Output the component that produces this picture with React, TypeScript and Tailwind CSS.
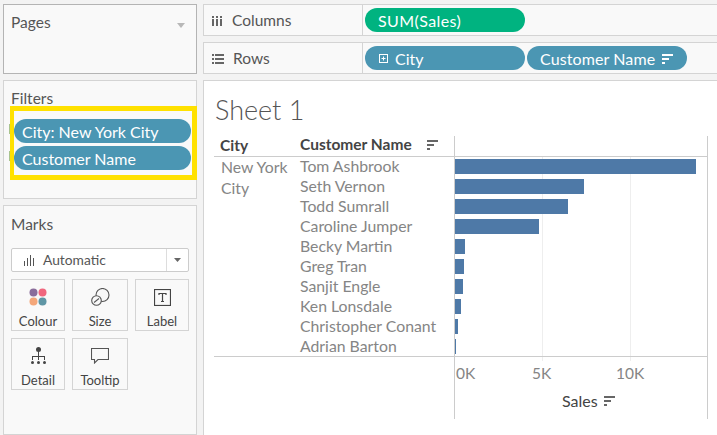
import React from "react";

const rows: [string, number][] = [
  ["Tom Ashbrook", 241],
  ["Seth Vernon", 129],
  ["Todd Sumrall", 113],
  ["Caroline Jumper", 84],
  ["Becky Martin", 10],
  ["Greg Tran", 9],
  ["Sanjit Engle", 8],
  ["Ken Lonsdale", 6],
  ["Christopher Conant", 3],
  ["Adrian Barton", 1],
];

function SortIcon({ color = "#666666" }: { color?: string }) {
  return (
    <svg width="11" height="10" viewBox="0 0 11 10" fill={color}>
      <rect x="0" y="0" width="11" height="2" />
      <rect x="0" y="4" width="7" height="2" />
      <rect x="0" y="8" width="3" height="2" />
    </svg>
  );
}

function Pill({ children, className }: { children: React.ReactNode; className: string }) {
  return (
    <div className={`h-6 flex items-center rounded-xl pt-px text-white text-[16px] ${className}`}>
      {children}
    </div>
  );
}

function MarkButton({ icon, label, wide }: { icon: React.ReactNode; label: string; wide?: boolean }) {
  return (
    <div
      className={`h-[52px] border border-[#d4d4d4] flex flex-col items-center justify-between pt-[7px] pb-px ${
        wide ? "w-[56px]" : "w-[54px]"
      }`}
    >
      <div className="h-[20px] flex items-center">{icon}</div>
      <span className="text-[13px] leading-[16px] text-[#444444]">{label}</span>
    </div>
  );
}

export default function App() {
  return (
    <div
      className="w-[717px] h-[435px] overflow-hidden bg-[#f3f3f3] flex gap-[6px] pl-[3px] pt-1"
      style={{ fontFamily: "Lato, sans-serif" }}
    >
      {/* Left side cards */}
      <div className="w-[194px] shrink-0 flex flex-col gap-[6px]">
        <div className="h-[70px] bg-[#f9f9f9] border border-[#b4b4b4] pl-[7px] pr-3 pt-[5px] flex justify-between">
          <span className="text-[15.5px] leading-[24px] text-[#555555]">Pages</span>
          <svg width="8" height="5" viewBox="0 0 8 5" fill="#b8b8b8" className="mt-[13px] mr-[-1px]">
            <path d="M0 0h8L4 5z" />
          </svg>
        </div>

        <div className="h-[119px] bg-[#f9f9f9] border border-[#d4d4d4] pt-[7px] relative">
          <div className="pl-[7px] text-[15.5px] leading-[20px] text-[#555555]">Filters</div>
          {/* filter handles peeking out behind the yellow highlight */}
          <div className="absolute left-[5px] top-[43px] w-px h-[10px] bg-[#a9c48f]" />
          <div className="absolute left-[5px] top-[70px] w-px h-[10px] bg-[#a9c48f]" />
          <div className="ml-[6px] mt-[-2px] h-[74px] w-[187px] border-y-[5px] border-r-[5px] border-l-4 border-[#ffe100] bg-[#f9f9f9] pt-2 flex flex-col gap-[3px]">
            <Pill className="w-[177px] pl-[8px] bg-[#4b96b3]">City: New York City</Pill>
            <Pill className="w-[177px] pl-[8px] bg-[#4b96b3]">Customer Name</Pill>
          </div>
        </div>

        <div className="flex-1 bg-[#f9f9f9] border border-[#d4d4d4] px-[7px] pt-[6px]">
          <div className="text-[15.5px] leading-[24px] text-[#555555]">Marks</div>
          <div className="mt-[12px] h-6 w-[178px] bg-white border border-[#cccccc] rounded-[2px] flex items-center">
            <div className="flex-1 flex items-center pl-[12px] gap-[8px] text-[13.8px] text-[#555555]">
              <svg width="11" height="11" viewBox="0 0 11 11" fill="#555555">
                <rect x="0" y="6" width="1" height="5" />
                <rect x="3" y="3" width="1" height="8" />
                <rect x="6" y="0" width="1" height="11" />
                <rect x="9" y="3" width="1" height="8" />
              </svg>
              Automatic
            </div>
            <div className="w-[22px] h-full border-l border-[#dddddd] flex items-center justify-center">
              <svg width="7" height="4" viewBox="0 0 7 4" fill="#666666">
                <path d="M0 0h7L3.500 4z" />
              </svg>
            </div>
          </div>
          <div className="mt-[7px] flex flex-wrap gap-x-[7px] gap-y-[7px] w-[182px]">
            <MarkButton
              label="Colour"
              icon={
                <svg width="18" height="18" viewBox="0 0 18 18">
                  <circle cx="4.500" cy="4.500" r="4" fill="#8a6d9b" />
                  <circle cx="13.500" cy="4.500" r="4" fill="#f0677e" />
                  <circle cx="4.500" cy="13.500" r="4" fill="#f4a77a" />
                  <circle cx="13.500" cy="13.500" r="4" fill="#5f96a5" />
                </svg>
              }
            />
            <MarkButton
              wide
              label="Size"
              icon={
                <svg width="19" height="18" viewBox="0 0 19 18" fill="none" stroke="#555555" strokeWidth="1.100">
                  <circle cx="11.500" cy="7" r="6.500" />
                  <circle cx="5.500" cy="12.500" r="4.800" fill="#f9f9f9" />
                  <path d="M3 14.500l5-4" />
                </svg>
              }
            />
            <MarkButton
              label="Label"
              icon={
                <svg width="17" height="17" viewBox="0 0 17 17" fill="none" stroke="#444444">
                  <rect x="0.500" y="0.500" width="16" height="16" strokeWidth="1.200" />
                  <path d="M5 6V4.500h7V6M8.500 4.500v8M7 12.500h3" strokeWidth="1.200" />
                </svg>
              }
            />
            <MarkButton
              label="Detail"
              icon={
                <svg width="17" height="18" viewBox="0 0 17 18" fill="#444444">
                  <circle cx="8.500" cy="2.500" r="2.500" />
                  <path d="M8 4h1v5H8zM2 9h13v1H2zM2 9h1v4H2zM8 9h1v4H8zM14 9h1v4h-1z" />
                  <circle cx="2.500" cy="15.500" r="1.500" />
                  <circle cx="8.500" cy="15.500" r="1.500" />
                  <circle cx="14.500" cy="15.500" r="1.500" />
                </svg>
              }
            />
            <MarkButton
              wide
              label="Tooltip"
              icon={
                <svg width="18" height="16" viewBox="0 0 18 16" fill="none" stroke="#555555" strokeWidth="1.100">
                  <path d="M0.500 0.500h17v11H7l-3.500 3.500v-3.500H0.500z" />
                </svg>
              }
            />
          </div>
        </div>
      </div>

      {/* Shelves and sheet */}
      <div className="flex-1 min-w-0 flex flex-col gap-[6px]">
        <div className="h-[32px] bg-[#f9f9f9] border-y border-l border-[#d4d4d4] flex">
          <div className="w-[159px] border-r border-[#d4d4d4] flex items-center pl-2 gap-[9px] pt-px text-[15.5px] text-[#555555]">
            <svg width="11" height="10" viewBox="0 0 11 10" fill="#666666">
              <rect x="0" y="0" width="2" height="2" />
              <rect x="4" y="0" width="2" height="2" />
              <rect x="8" y="0" width="2" height="2" />
              <rect x="0" y="3" width="2" height="7" />
              <rect x="4" y="3" width="2" height="7" />
              <rect x="8" y="3" width="2" height="7" />
            </svg>
            Columns
          </div>
          <div className="flex-1 pl-[2px] flex items-center">
            <Pill className="w-[160px] pl-[13px] bg-[#00b380] tracking-[0.4px]">SUM(Sales)</Pill>
          </div>
        </div>

        <div className="h-[32px] bg-[#f9f9f9] border-y border-l border-[#d4d4d4] flex">
          <div className="w-[159px] border-r border-[#d4d4d4] flex items-center pl-2 gap-[9px] pt-px text-[15.5px] text-[#555555]">
            <svg width="12" height="10" viewBox="0 0 12 10" fill="#666666">
              <rect x="0" y="0" width="2" height="2" />
              <rect x="3" y="0" width="9" height="2" />
              <rect x="0" y="4" width="2" height="2" />
              <rect x="3" y="4" width="9" height="2" />
              <rect x="0" y="8" width="2" height="2" />
              <rect x="3" y="8" width="9" height="2" />
            </svg>
            Rows
          </div>
          <div className="flex-1 pl-[2px] flex items-center gap-[2px]">
            <Pill className="w-[160px] pl-[14px] gap-[7px] bg-[#4b96b3]">
              <svg width="9" height="9" viewBox="0 0 9 9" fill="none" stroke="#ffffff">
                <rect x="0.500" y="0.500" width="8" height="8" />
                <path d="M2.500 4.500h4M4.500 2.500v4" />
              </svg>
              City
            </Pill>
            <Pill className="w-[160px] pl-[13px] gap-[7px] bg-[#4b96b3] tracking-[0.1px]">
              Customer Name
              <SortIcon color="#ffffff" />
            </Pill>
          </div>
        </div>

        <div className="flex-1 bg-white border-t border-l border-[#d4d4d4] pl-[10px] pt-[11px]">
          <div className="pl-px text-[27px] leading-[36px] font-light text-[#555555]">Sheet 1</div>
          <div className="mt-2 w-[494px]">
            {/* Header row */}
            <div className="h-[21px] flex border-b border-[#cccccc]">
              <div className="w-[86px] pl-[6px] text-[15.5px] leading-[18px] font-bold text-[#444444]">City</div>
              <div className="w-[154px] flex items-center h-[18px] text-[15.5px] font-bold text-[#444444]">
                <span className="whitespace-nowrap">Customer Name</span>
                <span className="ml-[15px]">
                  <SortIcon />
                </span>
              </div>
              <div className="flex-1 border-l border-r border-[#cccccc]" />
            </div>

            {/* Body */}
            <div className="h-[200px] flex border-b border-[#cccccc]">
              <div className="w-[86px] pl-[7px] -mt-px text-[15.8px] leading-[21px] text-[#858585]">
                New York
                <br />
                City
              </div>
              <div className="w-[154px] flex flex-col -mt-px text-[15.8px] leading-[20px] text-[#858585]">
                {rows.map(([name]) => (
                  <div key={name} className="h-5 whitespace-nowrap">
                    {name}
                  </div>
                ))}
              </div>
              <div className="flex-1 relative border-l border-r border-[#cccccc]">
                <div className="absolute top-0 bottom-0 left-[87px] w-px bg-[#eeeeee]" />
                <div className="absolute top-0 bottom-0 left-[175px] w-px bg-[#eeeeee]" />
                <div className="relative flex flex-col pt-[2px] gap-[5px]">
                  {rows.map(([name, width]) => (
                    <div key={name} className="h-[15px] bg-[#4e79a7]" style={{ width }} />
                  ))}
                </div>
              </div>
            </div>

            {/* Axis */}
            <div className="h-[62px] flex pl-[240px]">
              <div className="flex-1 relative border-l border-r border-[#cccccc]">
                <div className="absolute top-0 left-[87px] w-px h-1 bg-[#eeeeee]" />
                <div className="absolute top-0 left-[175px] w-px h-1 bg-[#eeeeee]" />
                <div className="absolute top-[6px] left-[1px] text-[15.5px] leading-[20px] text-[#858585]">0K</div>
                <div className="absolute top-[6px] left-[77px] text-[15.5px] leading-[20px] text-[#858585]">5K</div>
                <div className="absolute top-[6px] left-[161px] text-[15.5px] leading-[20px] text-[#858585]">10K</div>
                <div className="absolute top-[34px] left-[107px] flex items-center gap-[6px] text-[16px] leading-[20px] text-[#444444]">
                  Sales
                  <SortIcon />
                </div>
              </div>
            </div>
          </div>
        </div>
      </div>
    </div>
  );
}
